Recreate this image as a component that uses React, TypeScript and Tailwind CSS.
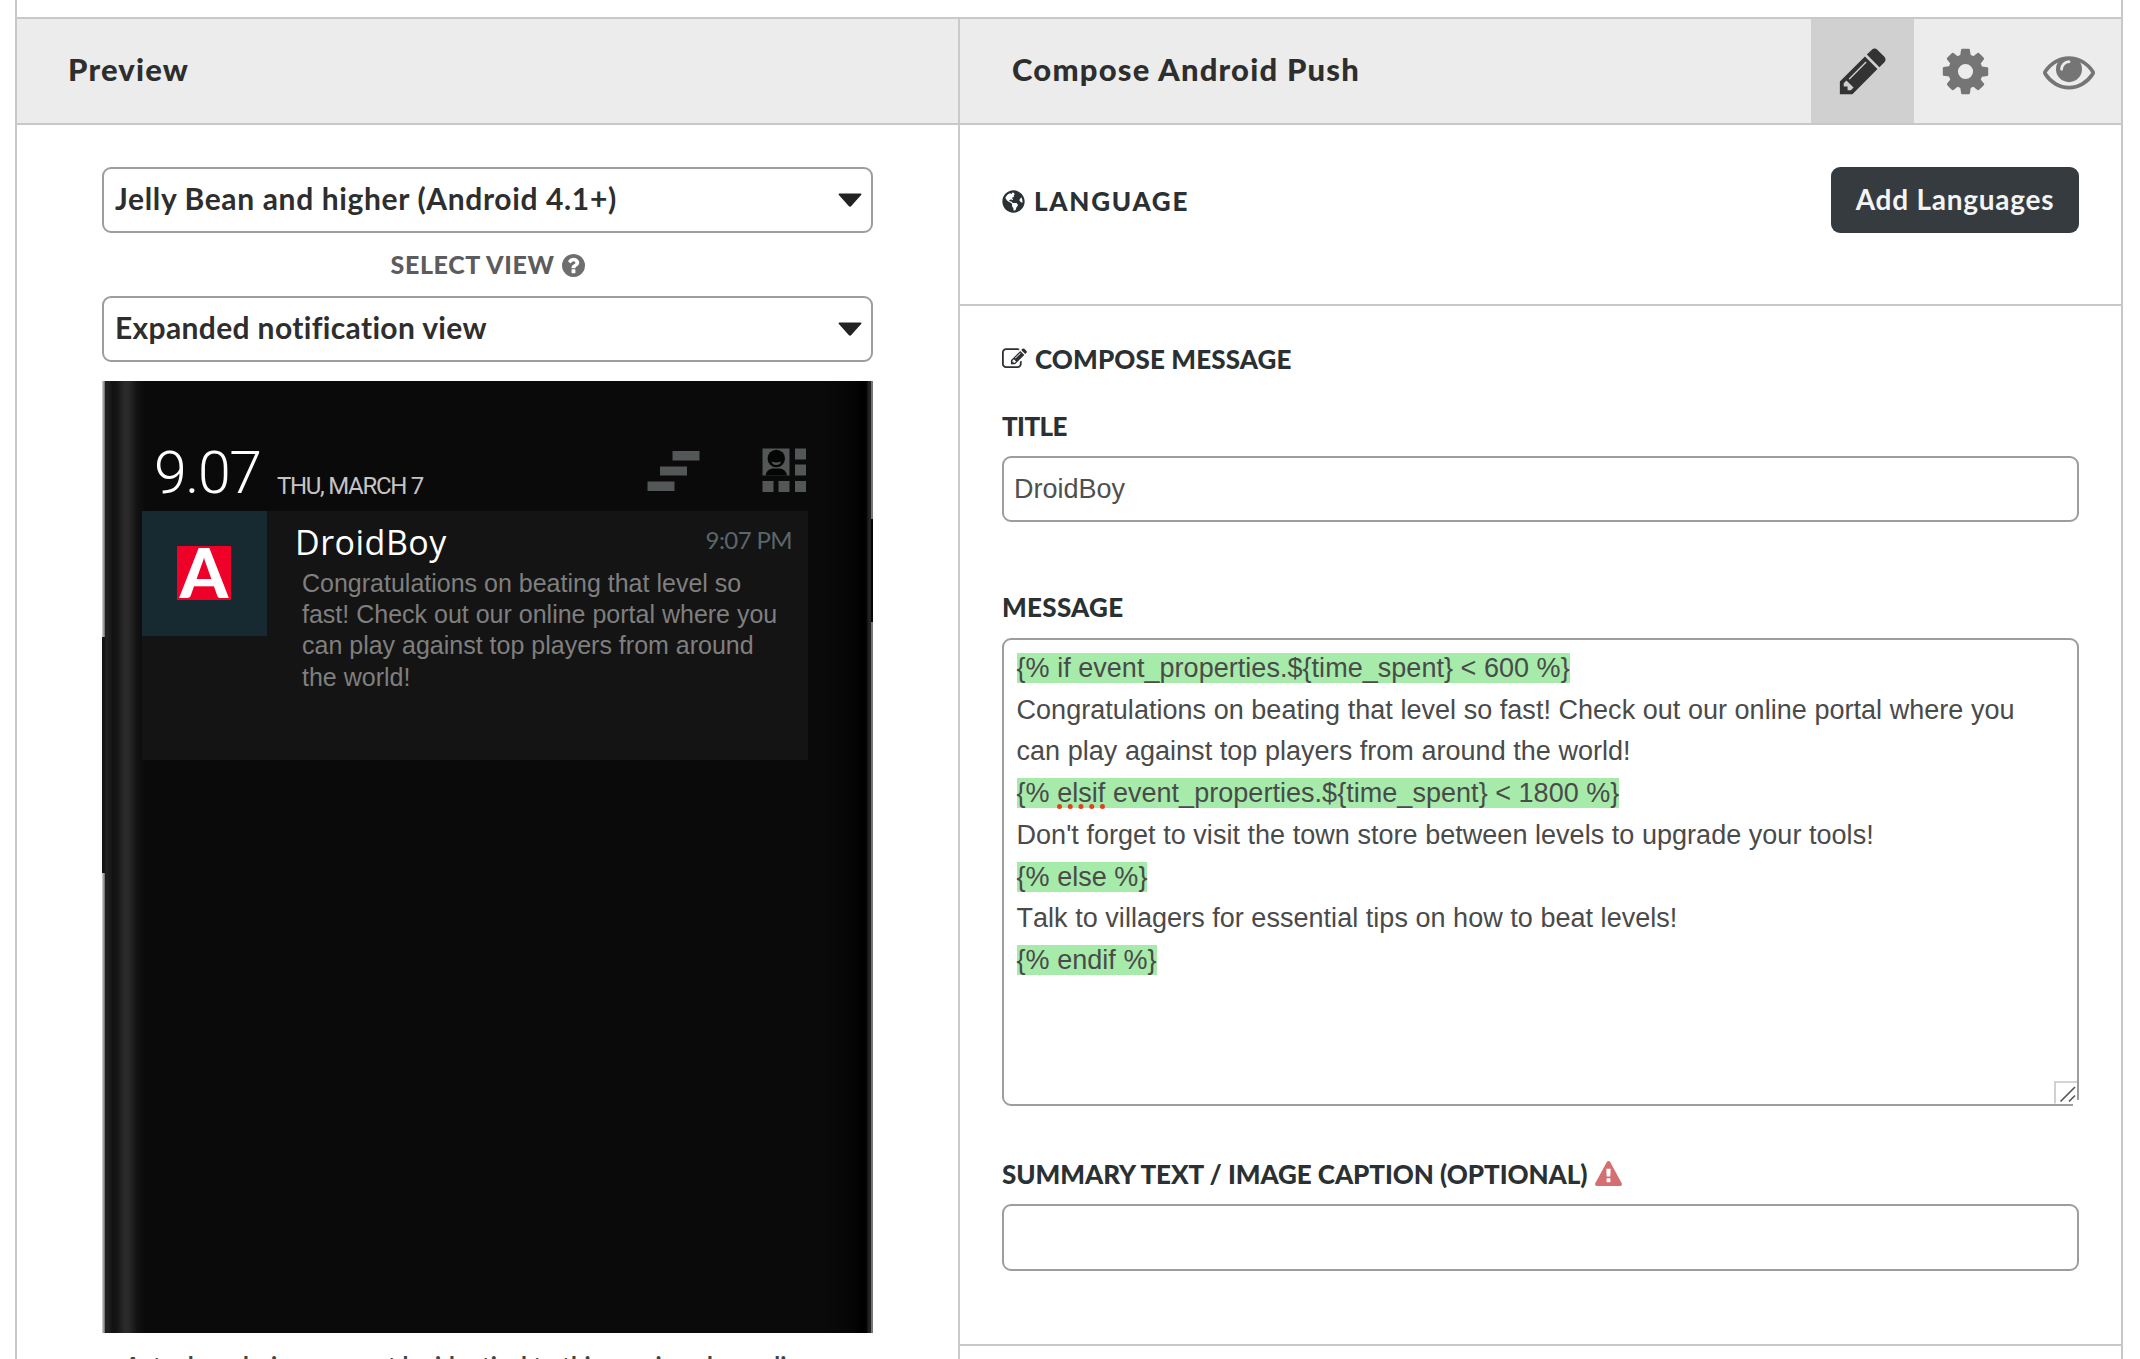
import type { ReactNode } from "react";
import { FaGlobeAmericas } from "react-icons/fa";

const ICONS = {
  pencil:
    "M491 1536l91-91-235-235-91 91v107h128v128h107zm523-928q0-22-22-22-10 0-17 7l-542 542q-7 7-7 17 0 22 22 22 10 0 17-7l542-542q7-7 7-17zm-54-192l416 416-832 832h-416v-416zm683 96q0 53-37 90l-166 166-416-416 166-165q36-38 90-38 53 0 91 38l235 234q37 39 37 91z",
  cog: "M1152 896q0-106-75-181t-181-75-181 75-75 181 75 181 181 75 181-75 75-181zm512-109v222q0 12-8 23t-20 13l-185 28q-19 54-39 91 35 50 107 138 10 12 10 25t-9 23q-27 37-99 108t-94 71q-12 0-26-9l-138-108q-44 23-91 38-16 136-29 186-7 28-36 28h-222q-14 0-24.5-8.5t-11.5-21.5l-28-184q-49-16-90-37l-141 107q-10 9-25 9-14 0-25-11-126-114-165-168-7-10-7-23 0-12 8-23 15-21 51-66.5t54-70.5q-27-50-41-99l-183-27q-13-2-21-12.5t-8-23.5v-222q0-12 8-23t19-13l186-28q14-46 39-92-40-57-107-138-10-12-10-24 0-10 9-23 26-36 98.5-107.5t94.5-71.5q13 0 26 10l138 107q44-23 91-38 16-136 29-186 7-28 36-28h222q14 0 24.5 8.5t11.5 21.5l28 184q49 16 90 37l142-107q9-9 24-9 13 0 25 10 129 119 165 170 7 8 7 22 0 12-8 23-15 21-51 66.5t-54 70.5q26 50 41 98l183 28q13 2 21 12.5t8 23.5z",
  eye: "M1664 960q-152-236-381-353 61 104 61 225 0 185-131.5 316.5t-316.5 131.5-316.5-131.5-131.5-316.5q0-121 61-225-229 117-381 353 133 205 333.5 326.5t434.5 121.5 434.5-121.5 333.5-326.5zm-720-384q0-20-14-34t-34-14q-125 0-214.5 89.5t-89.5 214.5q0 20 14 34t34 14 34-14 14-34q0-86 61-147t147-61q20 0 34-14t14-34zm848 384q0 34-20 69-140 230-376.5 368.5t-499.5 138.5-499.5-139-376.5-368q-20-35-20-69t20-69q140-229 376.5-368t499.5-139 499.5 139 376.5 368q20 35 20 69z",
  edit: "M888 1184l116-116-152-152-116 116v56h96v96h56zm440-720q-16-16-33 1l-350 350q-17 17-1 33t33-1l350-350q17-17 1-33zm80 594v190q0 119-84.5 203.5t-203.5 84.5h-832q-119 0-203.5-84.5t-84.5-203.5v-832q0-119 84.5-203.5t203.5-84.5h832q63 0 117 25 15 7 18 23 3 17-9 29l-49 49q-14 14-32 8-23-6-45-6h-832q-66 0-113 47t-47 113v832q0 66 47 113t113 47h832q66 0 113-47t47-113v-126q0-13 9-22l64-64q15-15 35-7t20 29zm-96-738l288 288-672 672h-288v-288zm444 132l-92 92-288-288 92-92q28-28 68-28t68 28l152 152q28 28 28 68t-28 68z",
  question:
    "M1024 1376v-192q0-14-9-23t-23-9h-192q-14 0-23 9t-9 23v192q0 14 9 23t23 9h192q14 0 23-9t9-23zm256-672q0-88-55.5-163t-138.5-116-170-41q-243 0-371 213-15 24 8 42l132 100q7 6 19 6 16 0 25-12 53-68 86-92 34-24 86-24 48 0 85.5 26t37.5 59q0 38-20 61t-68 45q-63 28-115.5 86.5t-52.5 125.5v36q0 14 9 23t23 9h192q14 0 23-9t9-23q0-19 21.5-49.5t54.5-49.5q32-18 49-28.5t46-35 44.5-48 28-60.5 12.5-81zm384 192q0 209-103 385.5t-279.5 279.5-385.5 103-385.5-103-279.5-279.5-103-385.5 103-385.5 279.5-279.5 385.5-103 385.5 103 279.5 279.5 103 385.5z",
  warning:
    "M1024 1375v-190q0-14-9.5-23.5t-22.5-9.5h-192q-13 0-22.5 9.5t-9.5 23.5v190q0 14 9.5 23.5t22.5 9.5h192q13 0 22.5-9.5t9.5-23.5zm-2-374l18-459q0-12-10-19-13-11-24-11h-220q-11 0-24 11-10 7-10 21l17 457q0 10 10 16.5t24 6.5h185q14 0 23.5-6.5t10.5-16.5zm-14-934l768 1408q35 63-2 126-17 29-46.5 46t-63.5 17h-1536q-34 0-63.5-17t-46.5-46q-37-63-2-126l768-1408q17-31 47-49t65-18 65 18 47 49z",
};

function Icon({ name, className, viewBox = "0 0 1792 1792" }: { name: keyof typeof ICONS; className: string; viewBox?: string }) {
  return (
    <svg viewBox={viewBox} className={className} fill="currentColor" aria-hidden="true">
      <path d={ICONS[name]} />
    </svg>
  );
}

function Select({ children, className }: { children: ReactNode; className: string }) {
  return (
    <div className="flex h-[66px] shrink-0 items-center justify-between rounded-[9px] border-2 border-[#9d9d9d] bg-white pl-[11px] pr-[9px]">
      <span className={`pb-[5px] text-[30px] font-bold leading-10 text-[#2e2e2e] ${className}`}>{children}</span>
      <svg viewBox="0 0 24 14" className="h-[14px] w-6" fill="#222">
        <path d="M1.5 0.5h21q1.5 0.3 0.6 1.6l-9.8 11q-1.3 1.2-2.6 0l-9.8-11q-0.9-1.3 0.6-1.6z" />
      </svg>
    </div>
  );
}

function Phone() {
  return (
    <div className="relative ml-px mt-[19px] h-[952px] w-[770px] shrink-0 bg-[linear-gradient(90deg,#1c1c1c_0px,#222_4px,#121212_10px,#151515_14px,#2b2b2b_22px,#292929_26px,#121212_34px,#0a0a0a_42px,#0a0a0a_720px,#050505_750px,#000_760px,#000_763px,#262626_766px,#1a1a1a_770px)]">
      {/* bezel highlights, interrupted by the side buttons */}
      <div className="absolute left-[-1px] top-0 h-[256px] w-[3px] bg-gradient-to-r from-[#d8d8d8] to-[#6a6a6a]" />
      <div className="absolute left-[-1px] top-[256px] h-[236px] w-[3px] bg-[#151515]" />
      <div className="absolute bottom-0 left-[-1px] h-[460px] w-[3px] bg-gradient-to-r from-[#d8d8d8] to-[#6a6a6a]" />
      <div className="absolute right-0 top-0 h-[138px] w-[2px] bg-[#777]" />
      <div className="absolute right-0 top-[138px] h-[103px] w-[2px] bg-[#050505]" />
      <div className="absolute bottom-0 right-0 h-[711px] w-[2px] bg-[#777]" />

      <div className="flex h-[130px] items-baseline pl-[51px] pr-[67px] pt-[62px] font-[Roboto,sans-serif]">
        <span className="w-[123px] text-[59px] font-light leading-[60px] tracking-[-1.4px] text-white">9.07</span>
        <span className="relative top-px text-[24px] leading-8 tracking-[-1.3px] text-[#c4c4c4]">THU, MARCH 7</span>
        <div className="ml-auto mt-[5px] flex gap-[62px] self-start">
          <svg viewBox="0 0 53 44" className="h-11 w-[53px]" fill="#535757">
            <rect x="25.5" y="3" width="27" height="9.5" />
            <rect x="13" y="18.5" width="27" height="9" />
            <rect x="0.5" y="33.5" width="27" height="9.5" />
          </svg>
          <svg viewBox="0 0 44 44" className="h-11 w-11" fill="#535757">
            <rect x="0.5" y="0.5" width="27" height="27" />
            <rect x="33" y="0.5" width="11" height="11" />
            <rect x="33" y="16.5" width="11" height="11" />
            <rect x="0.5" y="33" width="11" height="11" />
            <rect x="16.5" y="33" width="11" height="11" />
            <rect x="33" y="33" width="11" height="11" />
            <circle cx="14.3" cy="10.5" r="8.7" fill="#050505" />
            <path d="M3.5 27.5q1-6 7-7h7.500q6 1 7 7z" fill="#050505" />
            <path d="M9.500 13.500q4.500 2 9.500 0q-1 3.500-4.700 3.500t-4.800-3.500z" fill="#535757" />
          </svg>
        </div>
      </div>

      <div className="ml-[39px] flex h-[249px] w-[666px] bg-[#141414]">
        <div className="flex size-[125px] shrink-0 items-center justify-center bg-[#182a31] pr-px pb-px">
          <div className="flex size-[54px] items-center justify-center bg-[#ee0029] font-[Lato,sans-serif] text-[69px] font-black leading-[54px] text-white">
            <span className="relative -left-px top-[-1px] tracking-[-2px]">A</span>
          </div>
        </div>
        <div className="flex flex-1 flex-col pl-[28px] pt-[9px]">
          <div className="flex items-start justify-between pr-[16px]">
            <span className="font-['Open_Sans',sans-serif] text-[34px] leading-[44px] tracking-[0.5px] text-white">DroidBoy</span>
            <span className="mt-[4px] font-[Lato,sans-serif] text-[24px] leading-8 tracking-[-0.6px] text-[#5c666b]">9:07 PM</span>
          </div>
          <p className="mt-[4px] pl-[7px] font-['Liberation_Sans',sans-serif] text-[25px] leading-[31.2px] text-[#7f7f7f]">
            Congratulations on beating that level so
            <br />
            fast! Check out our online portal where you
            <br />
            can play against top players from around
            <br />
            the world!
          </p>
        </div>
      </div>
    </div>
  );
}

function Label({ children, className = "" }: { children: ReactNode; className?: string }) {
  return (
    <div className={`flex h-8 items-center whitespace-nowrap text-[26px] font-black leading-8 text-[#2b3032] ${className}`}>
      {children}
    </div>
  );
}

const Tag = ({ children }: { children: ReactNode }) => <span className="bg-[#a6ebaa]">{children}</span>;

export default function App() {
  return (
    <div className="flex h-[1359px] w-[2140px] overflow-hidden bg-white pl-[15px] font-[Lato,sans-serif]">
      <div className="flex h-full w-[2108px] flex-col border-x-2 border-[#c8c8c8] pt-[17px]">
        <header className="flex h-[108px] shrink-0 border-y-2 border-[#c8c8c8] bg-[#ececec] text-[31px] font-black tracking-[1.2px] text-[#2e2e2e]">
          <div className="flex w-[943px] items-center border-r-2 border-[#cacaca] pb-[3px] pl-[51px]">Preview</div>
          <div className="flex flex-1 items-center pb-[3px] pl-[52px]">Compose Android Push</div>
          <div className="flex h-full">
            <div className="flex w-[103px] items-center justify-center bg-[#d0d0d0] text-[#333]">
              <Icon name="pencil" className="size-[54px]" />
            </div>
            <div className="flex w-[103px] items-center justify-center text-[#757575]">
              <Icon name="cog" className="size-[53px]" />
            </div>
            <div className="flex w-[104px] items-center justify-center text-[#757575]">
              <Icon name="eye" className="size-[52px]" />
            </div>
          </div>
        </header>

        <div className="flex min-h-0 flex-1">
          <section className="w-[943px] shrink-0 border-r-2 border-[#cacaca] pl-[85px] pt-[42px]">
            <div className="flex w-[771px] flex-col">
              <Select className="tracking-[0.64px]">Jelly Bean and higher (Android 4.1+)</Select>
              <div className="flex h-[63px] items-center justify-center gap-[7px] pt-px text-[25px] font-black tracking-[0.65px] text-[#5c5c5c]">
                SELECT VIEW
                <Icon name="question" viewBox="128 128 1536 1536" className="size-[23px] text-[#6e6e6e]" />
              </div>
              <Select className="tracking-[0.35px]">Expanded notification view</Select>
              <Phone />
              <p className="mt-[18px] whitespace-nowrap pr-1 text-center text-[24px] font-bold leading-[30px] tracking-[0.14px] text-[#444]">
                Actual rendering may not be identical to this preview depending on
              </p>
            </div>
          </section>

          <div className="flex-1">
            <section className="flex h-[181px] items-start justify-between border-b-2 border-[#c8c8c8] pl-[42px] pr-[42px] pt-[42px]">
              <Label className="mt-[18px] gap-[9px] tracking-[1.75px]">
                <FaGlobeAmericas className="size-[23px]" />
                LANGUAGE
              </Label>
              <button className="h-[66px] w-[248px] rounded-[9px] bg-[#363b3f] pb-[3px] text-[28px] font-bold tracking-[0.75px] text-[#f4f4f4]">
                Add Languages
              </button>
            </section>

            <section className="h-[1040px] border-b-2 border-[#c8c8c8] pl-[42px] pr-[42px] pt-[37px]">
              <Label className="tracking-[0.12px]">
                <Icon name="edit" viewBox="0 128 1792 1536" className="mr-[8px] h-[22px] w-[25px]" />
                COMPOSE MESSAGE
              </Label>
              <Label className="mt-[35px] tracking-[-0.6px]">TITLE</Label>
              <div className="mt-[14px] flex h-[66px] items-center rounded-[9px] border-2 border-[#9d9d9d] pl-[10px] font-['Liberation_Sans',sans-serif] text-[27px] text-[#4f4f4f]">
                <span>DroidBoy</span>
              </div>
              <Label className="mt-[69px] tracking-[0.3px]">MESSAGE</Label>
              <div className="relative mt-[15px] h-[468px] rounded-[9px] border-2 border-[#9d9d9d] pl-[12.500px] pt-[8px] font-['Liberation_Sans',sans-serif] text-[27px] leading-[41.7px] tracking-[0.035px] text-[#4a4a4a]">
                <Tag>{"{% if event_properties.${time_spent} < 600 %}"}</Tag>
                <br />
                Congratulations on beating that level so fast! Check out our online portal where you
                <br />
                can play against top players from around the world!
                <br />
                <Tag>
                  {"{% "}
                  <span className="underline decoration-[#e0401c] decoration-dotted decoration-[5px] underline-offset-[2px] [text-decoration-skip-ink:none]">
                    elsif
                  </span>
                  {" event_properties.${time_spent} < 1800 %}"}
                </Tag>
                <br />
                Don't forget to visit the town store between levels to upgrade your tools!
                <br />
                <Tag>{"{% else %}"}</Tag>
                <br />
                <span className="[font-kerning:none]">Talk</span> to villagers for essential tips on how to beat levels!
                <br />
                <Tag>{"{% endif %}"}</Tag>
                <svg viewBox="0 0 25 25" className="absolute -bottom-0.5 -right-0.5 size-[25px]" fill="none">
                  <rect x="0" y="0" width="25" height="25" fill="#fff" />
                  <path d="M23.5 1H1V22.5" stroke="#c6c6c6" strokeWidth="1.6" />
                  <path d="M24 0V19M0 24H19" stroke="#9d9d9d" strokeWidth="2" />
                  <path d="M6.500 20.500L21 6M15 20.500L21 14.500" stroke="#555" strokeWidth="1.600" />
                </svg>
              </div>
              <Label className="mt-[52px] tracking-[-0.05px]">
                SUMMARY TEXT / IMAGE CAPTION (OPTIONAL)
                <Icon name="warning" viewBox="0 0 1792 1664" className="relative -top-px ml-[8px] h-[25px] w-[27px] text-[#d46f72]" />
              </Label>
              <div className="mt-[14px] h-[67px] rounded-[9px] border-2 border-[#9d9d9d]" />
            </section>
          </div>
        </div>
      </div>
    </div>
  );
}
